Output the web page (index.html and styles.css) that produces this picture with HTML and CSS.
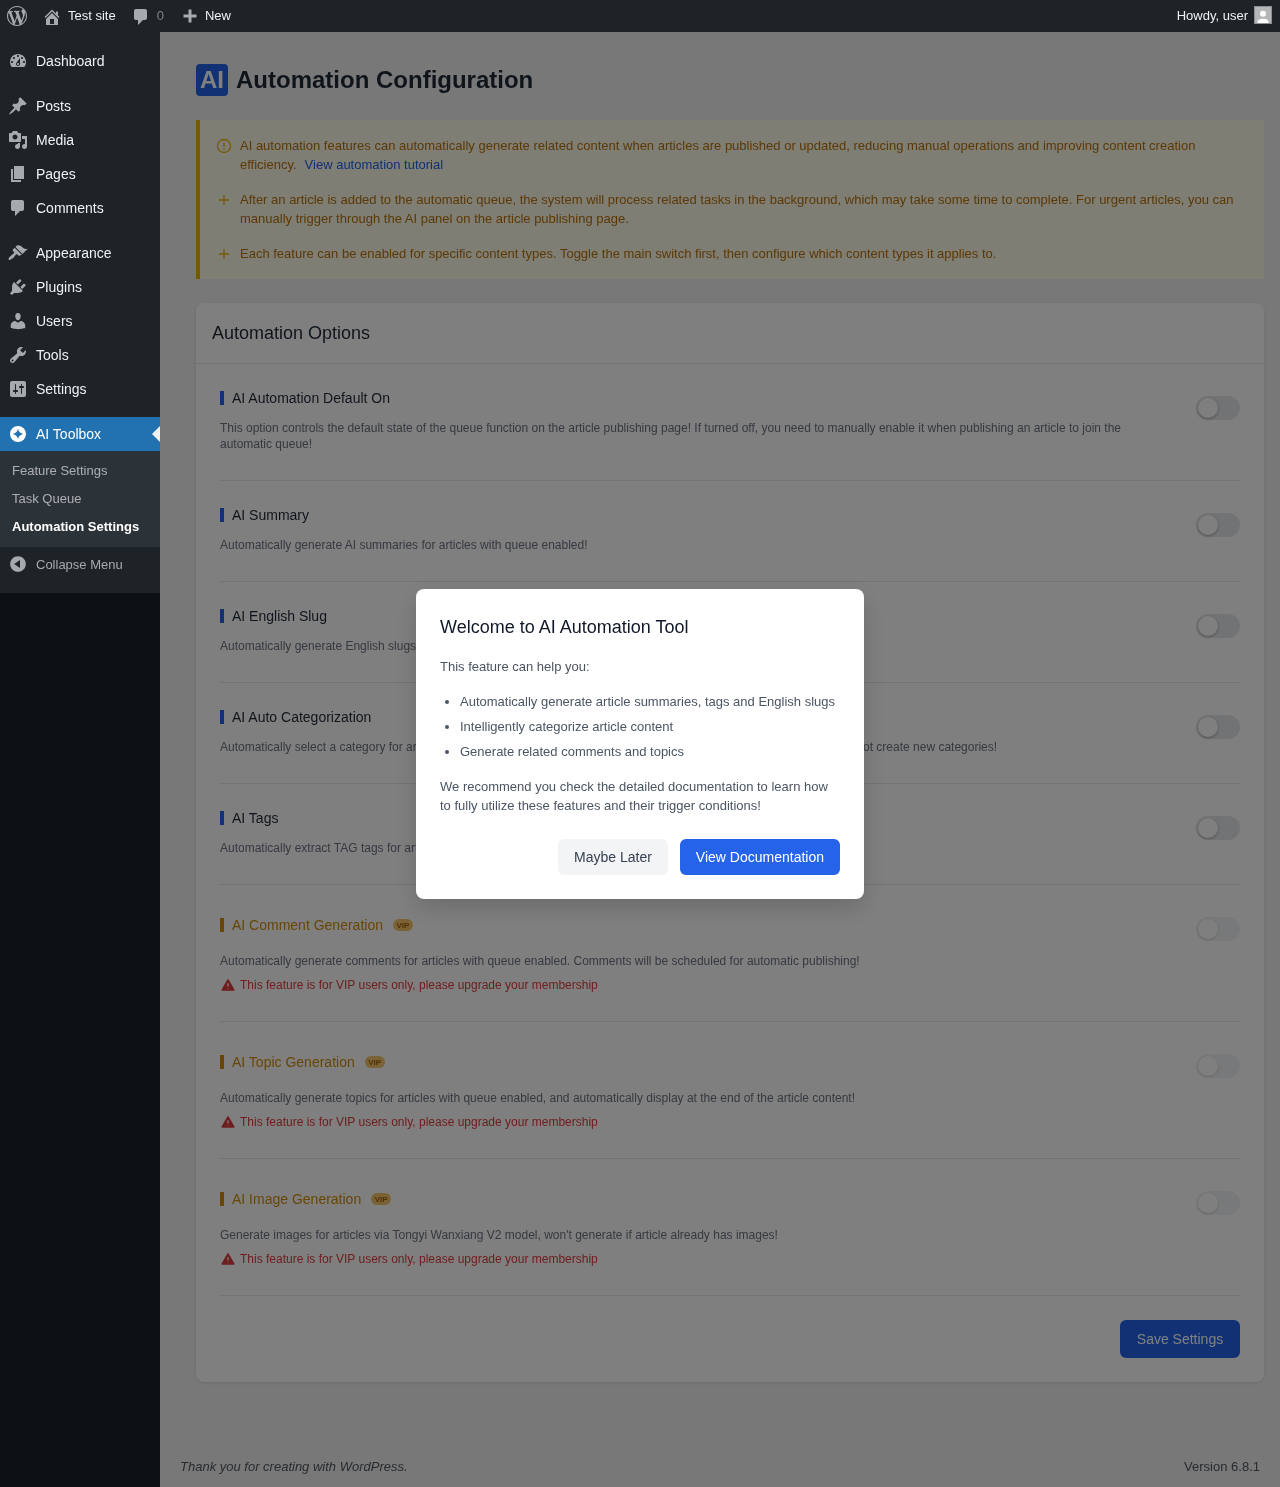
FILE: index.html
```html
<!DOCTYPE html>
<html>
<head>
  <title>Automation Settings</title>
  <meta charset="UTF-8"/>
  <link rel="stylesheet" href="styles.css">
</head>
<body>
  <div class="adminbar">
    <svg class="bar-logo" viewBox="0 0 20 20"><path d="M20 10c0-5.51-4.49-10-10-10C4.48 0 0 4.49 0 10c0 5.52 4.48 10 10 10 5.51 0 10-4.48 10-10zM7.78 15.37L4.37 6.22c.55-.02 1.17-.08 1.17-.08.5-.06.44-1.13-.06-1.11 0 0-1.45.11-2.37.11-.18 0-.37 0-.58-.01C4.12 2.69 6.87 1.11 10 1.11c2.33 0 4.45.87 6.05 2.34-.68-.11-1.65.39-1.65 1.58 0 .74.45 1.36.9 2.1.35.61.55 1.36.55 2.46 0 1.49-1.4 5-1.4 5l-3.03-8.37c.54-.02.82-.17.82-.17.5-.05.44-1.25-.06-1.22 0 0-1.44.12-2.38.12-.87 0-2.33-.12-2.33-.12-.5-.03-.56 1.2-.06 1.22l.92.08 1.26 3.41zM17.41 10c.24-.64.74-1.87.43-4.25.7 1.29 1.05 2.71 1.05 4.25 0 3.29-1.73 6.24-4.4 7.78.97-2.59 1.94-5.2 2.92-7.78zM6.1 18.09C3.12 16.65 1.11 13.53 1.11 10c0-1.3.23-2.48.72-3.59C3.25 10.3 4.67 14.2 6.1 18.09zm4.03-6.63l2.58 6.98c-.86.29-1.76.45-2.71.45-.79 0-1.57-.11-2.29-.33.81-2.38 1.62-4.74 2.42-7.1z"/></svg>
    <svg class="bar-icon home" viewBox="0 0 20 20"><path d="M16 8.5l1.53 1.53-1.06 1.06L10 4.62l-6.47 6.47-1.06-1.06L10 2.5l4 4v-2h2v4zm-6-2.46l6 5.99V18H4v-5.97zM12 17v-5H8v5h4z"/></svg>
    <span class="bar-text site">Test site</span>
    <svg class="bar-icon" viewBox="0 0 20 20"><path d="M5 2h9c1.1 0 2 .9 2 2v7c0 1.1-.9 2-2 2h-2l-5 5v-5H5c-1.1 0-2-.9-2-2V4c0-1.1.9-2 2-2z"/></svg>
    <span class="bar-text count">0</span>
    <svg class="bar-icon" viewBox="0 0 20 20"><path d="M16.500 7.500v3h-5v5h-3v-5h-5v-3h5v-5h3v5z"/></svg>
    <span class="bar-text new">New</span>
    <span class="bar-text howdy">Howdy, user</span>
    <span class="avatar"><svg viewBox="0 0 16 16"><circle cx="8" cy="6.800" r="3"/><path d="M2.500 16v-1c0-2 2.500-3.200 5.500-3.200s5.500 1.200 5.500 3.200v1z"/></svg></span>
  </div>

  <div class="layout">
    <div class="sidebar">
      <ul class="menu">
        <li class="menu-item"><svg viewBox="0 0 20 20"><path d="M3.760 16h12.480c1.100-1.370 1.760-3.110 1.760-5 0-4.420-3.580-8-8-8s-8 3.580-8 8c0 1.890.660 3.630 1.760 5zM10 4c.550 0 1 .450 1 1s-.450 1-1 1-1-.450-1-1 .450-1 1-1zM6 6c.550 0 1 .450 1 1s-.450 1-1 1-1-.450-1-1 .450-1 1-1zm8 0c.550 0 1 .450 1 1s-.450 1-1 1-1-.450-1-1 .450-1 1-1zm-5.370 5.550L12 7v6c0 1.100-.900 2-2 2s-2-.900-2-2c0-.570.240-1.080.630-1.450zM4 10c.550 0 1 .450 1 1s-.450 1-1 1-1-.450-1-1 .450-1 1-1zm12 0c.550 0 1 .450 1 1s-.450 1-1 1-1-.450-1-1 .450-1 1-1zm-5 3c0-.550-.450-1-1-1s-1 .450-1 1 .450 1 1 1 1-.450 1-1z"/></svg>Dashboard</li>
        <li class="menu-sep"></li>
        <li class="menu-item"><svg viewBox="0 0 20 20"><path d="M10.440 3.020l1.820-1.820 6.360 6.350-1.830 1.820c-1.050-.680-2.480-.570-3.410.360l-.750.750c-.920.930-1.040 2.350-.350 3.410l-1.830 1.820-2.410-2.410-2.800 2.790c-.420.420-3.380 2.710-3.800 2.290s1.860-3.390 2.280-3.810l2.790-2.790L4.100 9.360l1.830-1.820c1.050.690 2.480.570 3.400-.360l.750-.750c.930-.920 1.050-2.350.360-3.410z"/></svg>Posts</li>
        <li class="menu-item"><svg viewBox="0 0 20 20"><path d="M13 11V4c0-.550-.450-1-1-1h-1.670L9 1H5L3.670 3H2c-.550 0-1 .450-1 1v7c0 .550.450 1 1 1h10c.550 0 1-.450 1-1zM7 4.500c1.380 0 2.500 1.120 2.500 2.500S8.380 9.500 7 9.500 4.500 8.380 4.500 7 5.620 4.500 7 4.500zM14 6h5v10.500c0 1.380-1.120 2.500-2.500 2.500S14 17.880 14 16.500s1.120-2.500 2.500-2.500c.170 0 .340.020.500.050V9h-3V6zm-4 8.050V13h2v3.500c0 1.380-1.120 2.500-2.500 2.500S7 17.880 7 16.500 8.120 14 9.500 14c.170 0 .340.020.500.050z"/></svg>Media</li>
        <li class="menu-item"><svg viewBox="0 0 20 20"><path d="M6 15V2h10v13H6zm-1 1h8v2H3V5h2v11z"/></svg>Pages</li>
        <li class="menu-item"><svg viewBox="0 0 20 20"><path d="M5 2h9c1.100 0 2 .900 2 2v7c0 1.100-.900 2-2 2h-2l-5 5v-5H5c-1.100 0-2-.900-2-2V4c0-1.100.900-2 2-2z"/></svg>Comments</li>
        <li class="menu-sep"></li>
        <li class="menu-item"><svg viewBox="0 0 20 20"><path d="M14.480 11.060L7.410 3.990l1.500-1.500c.500-.560 2.300-.470 3.510.320 1.210.800 1.430 1.280 2.910 2.100 1.180.640 2.450 1.260 4.450.850zm-.710.710L6.700 4.700 4.930 6.470c-.390.390-.390 1.020 0 1.410l1.060 1.060c.390.390.390 1.030 0 1.420-.600.600-1.430 1.110-2.210 1.690-.350.260-.700.530-1.010.840C1.430 13.710 0 16.060.700 16.760c.700.700 3.050-.730 4.700-2.080.310-.310.580-.660.840-1.010.580-.780 1.090-1.610 1.690-2.210.390-.390 1.030-.390 1.420 0l1.060 1.060c.390.390 1.020.390 1.410 0z"/></svg>Appearance</li>
        <li class="menu-item"><svg viewBox="0 0 20 20"><path d="M13.110 4.360L9.870 7.600 8 5.730l3.240-3.240c.350-.340 1.050-.200 1.560.320.520.510.660 1.210.310 1.550zm-8 1.770l.910-1.120 9.010 9.010-1.190.840c-.710.710-2.630 1.160-3.820 1.160H6.140L4.900 17.260c-.590.590-1.540.590-2.120 0-.590-.580-.590-1.530 0-2.120l1.240-1.240v-3.880c0-1.130.400-3.190 1.090-3.890zm7.260 3.970l3.240-3.240c.340-.350 1.040-.210 1.550.310.520.510.660 1.210.310 1.550l-3.240 3.250z"/></svg>Plugins</li>
        <li class="menu-item"><svg viewBox="0 0 20 20"><path d="M10 9.250c-2.270 0-2.730-3.440-2.730-3.440C7 4.020 7.820 2 9.970 2c2.160 0 2.980 2.020 2.710 3.810 0 0-.410 3.440-2.680 3.440zm0 2.570L12.720 10c2.390 0 4.520 2.330 4.520 4.530v2.490s-3.650 1.130-7.240 1.130c-3.650 0-7.240-1.130-7.240-1.130v-2.490c0-2.250 1.940-4.480 4.470-4.480z"/></svg>Users</li>
        <li class="menu-item"><svg viewBox="0 0 20 20"><path d="M16.680 9.770c-1.340 1.340-3.300 1.670-4.950.990l-5.410 6.520c-.990.990-2.590.990-3.580 0s-.990-2.590 0-3.570l6.520-5.420c-.680-1.650-.350-3.610.990-4.950 1.280-1.280 3.120-1.620 4.720-1.060l-2.890 2.890 2.820 2.820 2.860-2.870c.530 1.580.180 3.390-1.080 4.650zM3.810 16.210c.400.390 1.040.390 1.430 0 .400-.400.400-1.040 0-1.430-.390-.400-1.030-.400-1.430 0-.390.390-.390 1.030 0 1.430z"/></svg>Tools</li>
        <li class="menu-item"><svg viewBox="0 0 20 20"><path d="M18 16V4c0-1.100-.900-2-2-2H4c-1.100 0-2 .900-2 2v12c0 1.100.900 2 2 2h12c1.100 0 2-.900 2-2zM8 11h1c.550 0 1 .450 1 1s-.450 1-1 1H8v1.500c0 .280-.220.500-.500.500s-.500-.220-.500-.500V13H6c-.550 0-1-.450-1-1s.450-1 1-1h1V5.500c0-.280.220-.500.500-.500s.500.220.500.500V11zm5-2h-1c-.550 0-1-.450-1-1s.450-1 1-1h1V5.500c0-.280.220-.500.500-.500s.500.220.500.500V7h1c.550 0 1 .450 1 1s-.450 1-1 1h-1v5.500c0 .280-.220.500-.500.500s-.500-.220-.500-.500V9z"/></svg>Settings</li>
        <li class="menu-sep"></li>
        <li class="menu-item current"><svg viewBox="0 0 20 20"><path fill-rule="evenodd" d="M10 2a8 8 0 1 0 0 16 8 8 0 0 0 0-16zm0 2.800c.500 2.800 2.400 4.700 5.200 5.200-2.800.500-4.700 2.400-5.200 5.200-.500-2.800-2.400-4.700-5.200-5.200 2.800-.500 4.700-2.400 5.200-5.200z"/></svg>AI Toolbox</li>
        <li class="submenu">
          <a>Feature Settings</a>
          <a>Task Queue</a>
          <a class="on">Automation Settings</a>
        </li>
        <li class="menu-item collapse"><svg viewBox="0 0 20 20"><path d="M10 2.160c4.330 0 7.840 3.510 7.840 7.840s-3.510 7.840-7.840 7.840S2.160 14.330 2.160 10 5.710 2.160 10 2.160zm2 11.720V6.120L6.180 9.970z"/></svg>Collapse Menu</li>
      </ul>
    </div>

    <div class="content">
      <div class="wrap">
        <h1 class="page-title"><span class="ai-badge">AI</span><span class="title-text">Automation Configuration</span></h1>

        <div class="notice">
          <div class="notice-row">
            <svg viewBox="0 0 16 16"><circle cx="8" cy="8" r="6.500"/><path d="M8 4.800v3.800M8 10.600v.8"/></svg>
            <p>AI automation features can automatically generate related content when articles are published or updated, reducing manual operations and improving content creation efficiency.<a class="tutorial">View automation tutorial</a></p>
          </div>
          <div class="notice-row">
            <svg viewBox="0 0 16 16"><path d="M8 3.500v9M3.500 8h9"/></svg>
            <p>After an article is added to the automatic queue, the system will process related tasks in the background, which may take some time to complete. For urgent articles, you can manually trigger through the AI panel on the article publishing page.</p>
          </div>
          <div class="notice-row">
            <svg viewBox="0 0 16 16"><path d="M8 3.500v9M3.500 8h9"/></svg>
            <p>Each feature can be enabled for specific content types. Toggle the main switch first, then configure which content types it applies to.</p>
          </div>
        </div>

        <div class="card">
          <h2 class="card-title">Automation Options</h2>
          <div class="card-body">
            <div class="setting">
              <div class="setting-text">
                <h3 class="setting-name">AI Automation Default On</h3>
                <p class="setting-desc">This option controls the default state of the queue function on the article publishing page! If turned off, you need to manually enable it when publishing an article to join the automatic queue!</p>
              </div>
              <span class="toggle"></span>
            </div>
            <div class="setting">
              <div class="setting-text">
                <h3 class="setting-name">AI Summary</h3>
                <p class="setting-desc">Automatically generate AI summaries for articles with queue enabled!</p>
              </div>
              <span class="toggle"></span>
            </div>
            <div class="setting">
              <div class="setting-text">
                <h3 class="setting-name">AI English Slug</h3>
                <p class="setting-desc">Automatically generate English slugs for articles with queue enabled!</p>
              </div>
              <span class="toggle"></span>
            </div>
            <div class="setting">
              <div class="setting-text">
                <h3 class="setting-name">AI Auto Categorization</h3>
                <p class="setting-desc">Automatically select a category for articles with queue enabled from existing categories, AI will only choose one and will not create new categories!</p>
              </div>
              <span class="toggle"></span>
            </div>
            <div class="setting">
              <div class="setting-text">
                <h3 class="setting-name">AI Tags</h3>
                <p class="setting-desc">Automatically extract TAG tags for articles with queue enabled!</p>
              </div>
              <span class="toggle"></span>
            </div>
            <div class="setting vip">
              <div class="setting-text">
                <h3 class="setting-name">AI Comment Generation<span class="vip-badge">VIP</span></h3>
                <p class="setting-desc">Automatically generate comments for articles with queue enabled. Comments will be scheduled for automatic publishing!</p>
                <p class="vip-note"><svg viewBox="0 0 14 14"><path class="warn-shape" d="M7 2L12.800 12H1.200z"/><path class="warn-mark" d="M7 5.200v3.400M7 10.200v.5"/></svg>This feature is for VIP users only, please upgrade your membership</p>
              </div>
              <span class="toggle"></span>
            </div>
            <div class="setting vip">
              <div class="setting-text">
                <h3 class="setting-name">AI Topic Generation<span class="vip-badge">VIP</span></h3>
                <p class="setting-desc">Automatically generate topics for articles with queue enabled, and automatically display at the end of the article content!</p>
                <p class="vip-note"><svg viewBox="0 0 14 14"><path class="warn-shape" d="M7 2L12.800 12H1.200z"/><path class="warn-mark" d="M7 5.200v3.400M7 10.200v.5"/></svg>This feature is for VIP users only, please upgrade your membership</p>
              </div>
              <span class="toggle"></span>
            </div>
            <div class="setting vip">
              <div class="setting-text">
                <h3 class="setting-name">AI Image Generation<span class="vip-badge">VIP</span></h3>
                <p class="setting-desc">Generate images for articles via Tongyi Wanxiang V2 model, won't generate if article already has images!</p>
                <p class="vip-note"><svg viewBox="0 0 14 14"><path class="warn-shape" d="M7 2L12.800 12H1.200z"/><path class="warn-mark" d="M7 5.200v3.400M7 10.200v.5"/></svg>This feature is for VIP users only, please upgrade your membership</p>
              </div>
              <span class="toggle"></span>
            </div>
            <div class="card-actions">
              <button type="button" class="btn btn-primary btn-save">Save Settings</button>
            </div>
          </div>
        </div>
      </div>

      <div class="footer">
        <em>Thank you for creating with WordPress.</em>
        <span>Version 6.8.1</span>
      </div>
    </div>
  </div>

  <div class="overlay">
    <div class="modal">
      <h2>Welcome to AI Automation Tool</h2>
      <p>This feature can help you:</p>
      <ul>
        <li>Automatically generate article summaries, tags and English slugs</li>
        <li>Intelligently categorize article content</li>
        <li>Generate related comments and topics</li>
      </ul>
      <p>We recommend you check the detailed documentation to learn how to fully utilize these features and their trigger conditions!</p>
      <div class="modal-actions">
        <button type="button" class="btn btn-light">Maybe Later</button>
        <button type="button" class="btn btn-primary">View Documentation</button>
      </div>
    </div>
  </div>
</body>
</html>
```

FILE: styles.css
```css
* {
    box-sizing: border-box;
}
html, body {
    margin: 0;
    padding: 0;
    height: 100%;
}
body {
    background-color: #f0f0f1;
    font-family: "Liberation Sans", Arial, sans-serif;
    font-size: 13px;
    color: #3c434a;
}
h1, h2, h3, p, ul {
    margin: 0;
    padding: 0;
}

/* top bar */
.adminbar {
    display: flex;
    align-items: center;
    position: relative;
    z-index: 200;
    height: 32px;
    padding: 0 8px 0 7px;
    background-color: #1d2327;
    color: #f0f0f1;
    will-change: transform;
}
.adminbar svg {
    fill: #a7aaad;
}
.bar-logo {
    width: 20px;
    height: 20px;
    margin-right: 15px;
}
.bar-icon {
    width: 20px;
    height: 20px;
    margin-top: 1px;
}
.bar-icon.home {
    margin-right: 6px;
}
.bar-text {
    padding-bottom: 2px;
}
.bar-text.site {
    margin-right: 15px;
}
.bar-text.count {
    margin: 0 16px 0 6px;
    color: #a7aaad;
    opacity: .7;
}
.bar-text.new {
    margin-left: 5px;
}
.bar-text.howdy {
    margin-left: auto;
    margin-right: 6px;
}
.avatar {
    display: block;
    width: 18px;
    height: 18px;
    margin-top: -2px;
    background-color: #b4b6b8;
    border: 1px solid #8c8f94;
    overflow: hidden;
}
.adminbar .avatar svg {
    display: block;
    width: 16px;
    height: 16px;
    fill: #fff;
}

/* sidebar */
.layout {
    display: flex;
    min-height: calc(100% - 32px);
}
.sidebar {
    flex: 0 0 160px;
    background-color: #1d2327;
}
.menu {
    position: relative;
    z-index: 200;
    padding: 12px 0;
    list-style: none;
    background-color: #1d2327;
    will-change: transform;
}
.menu-item {
    display: flex;
    align-items: center;
    position: relative;
    height: 34px;
    padding-left: 8px;
    font-size: 14px;
    color: #f0f0f1;
}
.menu-item svg {
    width: 20px;
    height: 20px;
    margin-right: 8px;
    fill: #a7aaad;
}
.menu-sep {
    height: 11px;
}
.menu-item.current {
    background-color: #2271b1;
    color: #fff;
}
.menu-item.current svg {
    fill: #fff;
}
.menu-item.current::after {
    content: "";
    position: absolute;
    right: 0;
    top: 9px;
    border: 8px solid transparent;
    border-right-color: #f0f0f1;
    border-left-width: 0;
}
.submenu {
    padding: 6px 0;
    background-color: #2c3338;
}
.submenu a {
    display: block;
    height: 28px;
    padding-left: 12px;
    line-height: 28px;
    color: #c3c4c7;
    opacity: .85;
}
.submenu a.on {
    color: #fff;
    font-weight: bold;
    opacity: 1;
}
.menu-item.collapse {
    font-size: 13px;
    color: #a7aaad;
}

/* main column */
.content {
    display: flex;
    flex-direction: column;
    flex: 1;
    min-width: 0;
    will-change: transform;
}
.wrap {
    padding: 32px 16px 0 36px;
}
.page-title {
    display: flex;
    align-items: center;
    gap: 8px;
    height: 32px;
    margin-bottom: 24px;
    font-size: 24px;
    font-weight: bold;
    color: #1f2937;
}
.ai-badge {
    width: 32px;
    height: 32px;
    background-color: #2563eb;
    border-radius: 4px;
    color: #fff;
    font-size: 24px;
    font-weight: bold;
    line-height: 32px;
    text-align: center;
}
.notice {
    display: flex;
    flex-direction: column;
    gap: 16px;
    padding: 16px;
    margin-bottom: 24px;
    background-color: #fefce8;
    border-left: 4px solid #eab308;
}
.notice-row {
    display: flex;
    gap: 8px;
    color: #b8720c;
    line-height: 19px;
}
.notice-row svg {
    flex: 0 0 16px;
    width: 16px;
    height: 16px;
    margin-top: 2px;
    fill: none;
    stroke: #eab308;
    stroke-width: 1.300;
    stroke-linecap: round;
}
.tutorial {
    margin-left: 8px;
    color: #2563eb;
}

/* options card */
.card {
    background-color: #fff;
    border-radius: 8px;
    box-shadow: 0 1px 3px rgba(0,0,0,.1);
}
.card-title {
    height: 61px;
    padding: 0 16px;
    border-bottom: 1px solid #e5e7eb;
    font-size: 18px;
    font-weight: normal;
    line-height: 60px;
    color: #1f2937;
}
.card-body {
    padding: 24px;
}
.setting {
    display: flex;
    justify-content: space-between;
    padding-bottom: 28px;
    margin-bottom: 24px;
    border-bottom: 1px solid #e5e7eb;
}
.setting-text {
    flex: 1;
    padding-right: 40px;
}
.setting-name {
    display: flex;
    align-items: center;
    height: 20px;
    margin-bottom: 12px;
    font-size: 14px;
    font-weight: normal;
    color: #1f2937;
}
.setting-name::before {
    content: "";
    width: 4px;
    height: 14px;
    margin-right: 8px;
    background-color: #2563eb;
}
.setting-desc {
    font-size: 12px;
    line-height: 16px;
    color: #6b7280;
}
.toggle {
    flex: 0 0 44px;
    position: relative;
    height: 24px;
    margin-top: 8px;
    background-color: #e5e7eb;
    border-radius: 12px;
}
.toggle::after {
    content: "";
    position: absolute;
    left: 2px;
    top: 2px;
    width: 20px;
    height: 20px;
    background-color: #fff;
    border-radius: 50%;
    box-shadow: 0 1px 3px rgba(0,0,0,.3);
}
.vip .setting-name {
    height: 32px;
    color: #d18c0a;
}
.vip .setting-name::before {
    background-color: #d18c0a;
}
.vip .toggle {
    opacity: .5;
}
.vip-badge {
    width: 20px;
    height: 12px;
    margin-left: 10px;
    background-color: #f5c56b;
    border-radius: 6px;
    color: #a16207;
    font-size: 8px;
    font-weight: bold;
    line-height: 13px;
    text-align: center;
}
.vip-note {
    display: flex;
    align-items: center;
    gap: 5px;
    height: 16px;
    margin-top: 8px;
    padding-left: 1px;
    font-size: 12px;
    color: #dc3c3c;
}
.vip-note svg {
    width: 14px;
    height: 14px;
}
.warn-shape {
    fill: #dc3c3c;
    stroke: #dc3c3c;
    stroke-width: 1.500;
    stroke-linejoin: round;
}
.warn-mark {
    fill: none;
    stroke: #fff;
    stroke-width: 1.300;
}
.card-actions {
    display: flex;
    justify-content: flex-end;
}

/* buttons */
.btn {
    height: 36px;
    padding: 0 16px;
    border: none;
    border-radius: 6px;
    font-family: inherit;
    font-size: 14px;
}
.btn-primary {
    background-color: #2563eb;
    color: #fff;
}
.btn-light {
    background-color: #f3f4f6;
    color: #374151;
}
.btn-save {
    width: 120px;
    height: 38px;
    padding: 0;
}

.footer {
    display: flex;
    justify-content: space-between;
    margin-top: auto;
    padding: 0 20px 12px;
    line-height: 16px;
    color: #50575e;
}

/* welcome popup */
.overlay {
    display: flex;
    align-items: center;
    justify-content: center;
    position: fixed;
    top: 0;
    right: 0;
    bottom: 0;
    left: 0;
    z-index: 100;
    background-color: rgba(0,0,0,.5);
    will-change: transform;
}
.modal {
    width: 448px;
    padding: 24px;
    background-color: #fff;
    border-radius: 8px;
    box-shadow: 0 10px 25px rgba(0,0,0,.15);
    color: #4b5563;
    line-height: 19px;
}
.modal h2 {
    margin-bottom: 16px;
    font-size: 18px;
    font-weight: normal;
    line-height: 28px;
    color: #111827;
}
.modal ul {
    margin: 16px 0;
    padding-left: 20px;
}
.modal li {
    margin-bottom: 6px;
}
.modal li:last-child {
    margin-bottom: 0;
}
.modal-actions {
    display: flex;
    justify-content: flex-end;
    gap: 12px;
    margin-top: 24px;
}
```
